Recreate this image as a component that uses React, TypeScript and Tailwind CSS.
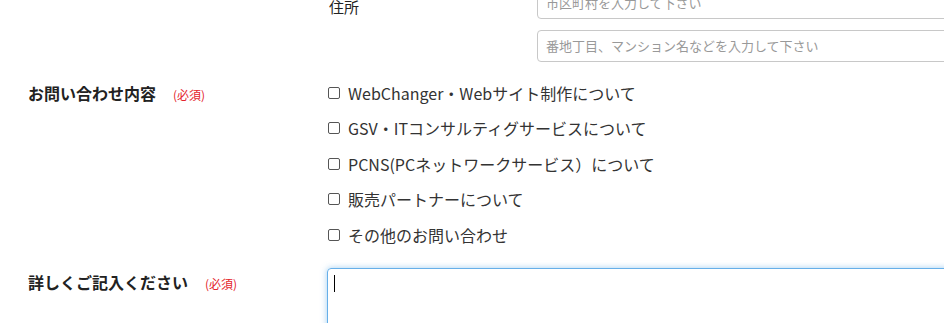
import React from "react";

const topics = [
  "WebChanger・Webサイト制作について",
  "GSV・ITコンサルティグサービスについて",
  "PCNS(PCネットワークサービス）について",
  "販売パートナーについて",
  "その他のお問い合わせ",
];

function Required() {
  return <span className="ml-[17px] text-[12px] font-normal text-[#e4242b]">(必須)</span>;
}

export default function App() {
  return (
    <div className="w-[944px] h-[323px] overflow-hidden bg-white text-[#333] font-['Noto_Sans_CJK_JP',sans-serif]">
      <div className="-mt-[13px]">
        {/* address */}
        <div className="flex pl-[329px]">
          <div className="w-[208px] shrink-0 pt-[8px] text-[15px] leading-[24px] text-[#222]">住所</div>
          <div className="flex flex-col gap-[11px] shrink-0">
            <div className="w-[420px] h-[32px] rounded-[4px] border border-[#c8c8c8] px-[8px] flex items-center text-[13px] text-[#999]">
              市区町村を入力して下さい
            </div>
            <div className="w-[420px] h-[32px] rounded-[4px] border border-[#c8c8c8] px-[8px] flex items-center text-[13px] text-[#999]">
              番地丁目、マンション名などを入力して下さい
            </div>
          </div>
        </div>

        {/* topics */}
        <div className="flex mt-[13px]">
          <div className="w-[327px] shrink-0 pl-[28px] pt-[6px] text-[16px] leading-[24px] font-bold text-[#222]">
            お問い合わせ内容<Required />
          </div>
          <div className="flex flex-col">
            {topics.map((t) => (
              <div key={t} className="h-[35.5px] flex items-center">
                <span className="ml-[1px] w-[12px] h-[12px] border border-[#555] rounded-[2px] bg-white" />
                <span className="ml-[8px] text-[16px] leading-[24px]">{t}</span>
              </div>
            ))}
          </div>
        </div>

        {/* details */}
        <div className="flex mt-[15px]">
          <div className="w-[327px] shrink-0 pl-[28px] pt-[2px] text-[16px] leading-[24px] font-bold text-[#222]">
            詳しくご記入ください<Required />
          </div>
          <div className="w-[640px] h-[120px] shrink-0 rounded-[4px] border border-[#66afe9] shadow-[0_0_6px_rgba(102,175,233,0.6)] pl-[6px] pt-[6px]">
            <div className="w-[1px] h-[17px] bg-black" />
          </div>
        </div>
      </div>
    </div>
  );
}
